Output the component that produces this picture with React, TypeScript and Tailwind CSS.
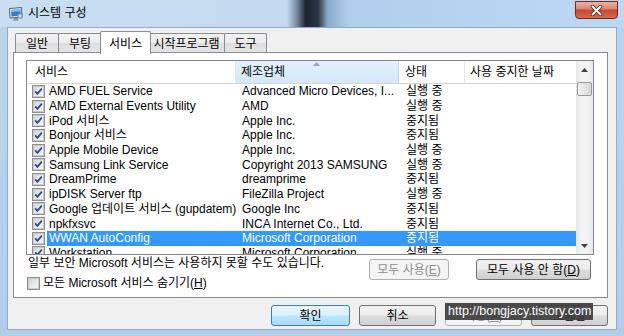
const rows = [
  { name: "AMD FUEL Service", maker: "Advanced Micro Devices, I...", state: "실행 중" },
  { name: "AMD External Events Utility", maker: "AMD", state: "실행 중" },
  { name: "iPod 서비스", maker: "Apple Inc.", state: "중지됨" },
  { name: "Bonjour 서비스", maker: "Apple Inc.", state: "중지됨" },
  { name: "Apple Mobile Device", maker: "Apple Inc.", state: "실행 중" },
  { name: "Samsung Link Service", maker: "Copyright 2013 SAMSUNG", state: "실행 중" },
  { name: "DreamPrime", maker: "dreamprime", state: "중지됨" },
  { name: "ipDISK Server ftp", maker: "FileZilla Project", state: "실행 중" },
  { name: "Google 업데이트 서비스 (gupdatem)", maker: "Google Inc", state: "중지됨" },
  { name: "npkfxsvc", maker: "INCA Internet Co., Ltd.", state: "중지됨" },
  { name: "WWAN AutoConfig", maker: "Microsoft Corporation", state: "중지됨", selected: true },
  { name: "Workstation", maker: "Microsoft Corporation", state: "실행 중" },
];

function CheckBox({ checked = true }: { checked?: boolean }) {
  return (
    <span className="flex h-[13px] w-[13px] shrink-0 items-center justify-center border border-[#8e8f8f] bg-white">
      <span className="flex h-[11px] w-[11px] items-center justify-center border border-[#c8cacb] bg-[linear-gradient(135deg,#d4d6d8,#f7f7f7)]">
        {checked && (
          <svg width="9" height="9" viewBox="0 0 9 9">
            <path d="M1.2 4.4 L3.4 6.9 L7.8 1.6" fill="none" stroke="#2c4a91" strokeWidth="1.7" />
          </svg>
        )}
      </span>
    </span>
  );
}

function Button({
  children,
  w,
  disabled,
  focused,
}: {
  children: React.ReactNode;
  w: string;
  disabled?: boolean;
  focused?: boolean;
}) {
  let cls =
    "border-[#707070] bg-[linear-gradient(#f2f2f2,#ebebeb_48%,#dddddd_52%,#cfcfcf)] text-black";
  if (disabled) cls = "border-[#adb2b5] bg-[#f4f4f4] text-[#8d8d8d]";
  if (focused)
    cls = "border-[#3c7fb1] bg-[linear-gradient(#eaf6fd,#d9f0fc_48%,#bee6fd_52%,#a7d9f5)] text-black";
  return (
    <div
      className={`flex h-[21px] items-center justify-center rounded-[3px] border text-[12px] ${w} ${cls}`}
    >
      {children}
    </div>
  );
}

function Tab({ label, w, active }: { label: string; w: string; active?: boolean }) {
  if (active) {
    return (
      <div
        className={`relative z-10 -mx-[2px] -mb-px flex h-[23px] items-start justify-center rounded-t-[2px] border border-b-0 border-[#898c95] bg-white pt-[3px] ${w}`}
      >
        {label}
      </div>
    );
  }
  return (
    <div
      className={`-ml-px flex h-[20px] items-center justify-center rounded-t-[2px] border border-b-0 border-[#898c95] bg-[linear-gradient(#f2f2f2,#ebebeb_50%,#dedede_50%,#e5e5e5)] first:ml-0 ${w}`}
    >
      {label}
    </div>
  );
}

export default function App() {
  return (
    <div className="relative flex h-[336px] w-[624px] flex-col overflow-hidden bg-[linear-gradient(#bcd4ed,#b3cde9)] font-['Liberation_Sans','Noto_Sans_CJK_KR',sans-serif] text-[12px] text-black">
      {/* title bar */}
      <div className="flex h-[27px] items-start bg-[linear-gradient(90deg,#cadef2_0%,#c2d9ef_46%,#7a8ea3_47.5%,#1c2531_49%,#2a3644_51%,#8aa8c7_52.5%,#b0cfee_56%,#bcd8f3_100%)]">
        <div className="ml-[8px] mt-[6px]">
          <svg width="16" height="16" viewBox="0 0 16 16">
            <path d="M1.5 2.5 L13.5 1.5 L14 11 L2 12 Z" fill="#e7edf3" stroke="#4d5f78" />
            <path d="M3 4 L12.3 3.2 L12.7 9.6 L3.4 10.4 Z" fill="#2f7fd8" />
            <path d="M3 4 L12.3 3.2 L12.4 5.2 L3.1 6 Z" fill="#7fc0f4" />
            <path d="M6 12 L9.5 11.7 L10.5 14.5 L5 14.8 Z" fill="#8796a8" />
            <rect x="10" y="8" width="4" height="4" fill="#d8dde2" stroke="#6a7788" strokeWidth="0.8" />
          </svg>
        </div>
        <span className="ml-[4px] mt-[6px] text-[12px] leading-[15px] text-black">시스템 구성</span>
        <div className="ml-auto mr-[6px] mt-[1px] flex h-[18px] w-[43px] items-center justify-center rounded-b-[4px] border border-[#6a2a1e] bg-[linear-gradient(#ebb2a4,#dd8a76_40%,#c84a32_52%,#d56a4e)]">
          <svg width="13" height="11" viewBox="0 0 13 11">
            <path d="M2.5 1.5 L10.5 9.5 M10.5 1.5 L2.5 9.5" stroke="#5b2318" strokeWidth="3.6" strokeLinecap="round" />
            <path d="M2.5 1.5 L10.5 9.5 M10.5 1.5 L2.5 9.5" stroke="#ffffff" strokeWidth="2" strokeLinecap="round" />
          </svg>
        </div>
      </div>

      {/* client area */}
      <div className="mx-[7px] flex h-[303px] flex-col border border-[#95aac2] bg-[#f0f0f0]">
        {/* tabs */}
        <div className="ml-[7px] mt-[3px] flex h-[22px] items-end">
          <Tab label="일반" w="w-[44px]" />
          <Tab label="부팅" w="w-[44px]" />
          <Tab label="서비스" w="w-[51px]" active />
          <Tab label="시작프로그램" w="w-[77px]" />
          <Tab label="도구" w="w-[43px]" />
        </div>

        {/* panel */}
        <div className="-mt-px ml-[5px] flex h-[246px] w-[595px] flex-col border border-[#898c95] bg-white">
          {/* list view */}
          <div className="ml-[12px] mt-[7px] flex h-[195px] w-[568px] border border-[#828790] bg-white">
            <div className="flex min-w-0 flex-1 flex-col overflow-hidden">
              <div className="flex h-[23px] shrink-0 border-b border-[#d5d5d5]">
                <div className="flex w-[209px] items-center border-r border-[#e3e8ee] pl-[8px]">서비스</div>
                <div className="relative flex w-[163px] items-center border-r border-[#c0dcf3] bg-[linear-gradient(#e3f1fb,#d3e8f9)] pl-[5px]">
                  제조업체
                  <svg className="absolute left-[77px] top-[1px]" width="7" height="4" viewBox="0 0 7 4">
                    <path d="M0 4 L3.5 0 L7 4 Z" fill="#8fa6bf" />
                  </svg>
                </div>
                <div className="flex w-[66px] items-center border-r border-[#e3e8ee] pl-[6px]">상태</div>
                <div className="flex flex-1 items-center pl-[5px]">사용 중지한 날짜</div>
              </div>
              {rows.map((r) => (
                <div key={r.name} className="flex h-[14.7px] shrink-0 items-center">
                  <div className="flex w-[20px] shrink-0 items-center pl-[5px]">
                    <CheckBox />
                  </div>
                  <div
                    className={`flex h-full flex-1 items-center whitespace-nowrap ${
                      r.selected ? "bg-[#3399ff] text-white" : ""
                    }`}
                  >
                    <span className="w-[189px] overflow-hidden pl-[2px]">{r.name}</span>
                    <span className="w-[163px] overflow-hidden pl-[6px]">{r.maker}</span>
                    <span className="w-[66px] pl-[7px]">{r.state}</span>
                    <span className="flex-1" />
                  </div>
                </div>
              ))}
            </div>
            {/* scrollbar */}
            <div className="flex w-[17px] shrink-0 flex-col items-center bg-[linear-gradient(90deg,#e6e6e6,#f3f3f3_30%,#f3f3f3_70%,#e6e6e6)]">
              <div className="flex h-[17px] items-center justify-center">
                <svg width="7" height="4" viewBox="0 0 7 4">
                  <path d="M0 4 L3.5 0 L7 4 Z" fill="#404040" />
                </svg>
              </div>
              <div className="mt-[4px] h-[14px] w-[15px] rounded-[2px] border border-[#979797] bg-[linear-gradient(90deg,#f1f1f1,#e4e4e4_50%,#d8d8d8)]" />
              <div className="mt-auto flex h-[17px] items-center justify-center">
                <svg width="7" height="4" viewBox="0 0 7 4">
                  <path d="M0 0 L3.5 4 L7 0 Z" fill="#404040" />
                </svg>
              </div>
            </div>
          </div>

          <div className="ml-[14px] mr-[16px] flex">
            <div className="flex flex-col">
              <span className="mt-[1px] leading-[14px]">일부 보안 Microsoft 서비스는 사용하지 못할 수도 있습니다.</span>
              <div className="ml-[-1px] mt-[6px] flex items-center gap-[3px]">
                <CheckBox checked={false} />
                <span className="leading-[14px]">
                  모든 Microsoft 서비스 숨기기(<span className="underline">H</span>)
                </span>
              </div>
            </div>
            <div className="ml-auto mt-[4px] flex gap-[27px]">
              <Button w="w-[80px]" disabled>
                모두 사용(<span className="underline">E</span>)
              </Button>
              <Button w="w-[115px]">
                모두 사용 안 함(<span className="underline">D</span>)
              </Button>
            </div>
          </div>
        </div>

        {/* dialog buttons */}
        <div className="mr-[8px] mt-[7px] flex justify-end gap-[9px]">
          <Button w="w-[79px]" focused>
            확인
          </Button>
          <Button w="w-[77px]">취소</Button>
          <Button w="w-[77px]" disabled>
            적용(<span className="underline">A</span>)
          </Button>
          <Button w="w-[77px]">도움말</Button>
        </div>
      </div>

      {/* watermark */}
      <div className="absolute left-[445px] top-[303px] h-[17px] w-[148px] bg-[#3a3a3a]/90 px-[3px] text-[12.5px] leading-[17px] text-white">
        http://bongjacy.tistory.com
      </div>
    </div>
  );
}
